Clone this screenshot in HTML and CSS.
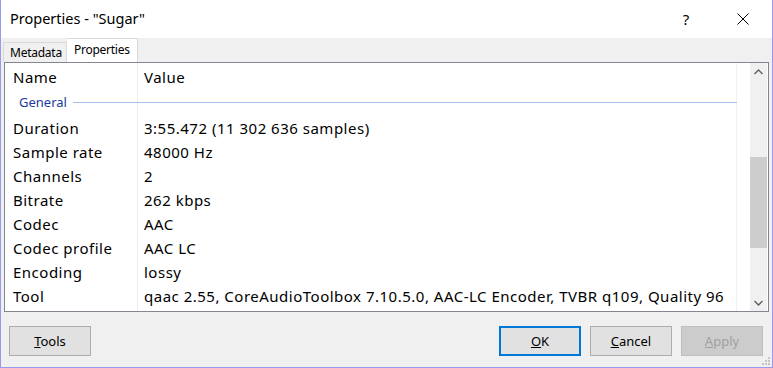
FILE: index.html
```html
<!DOCTYPE html>
<html lang="en">
<head>
    <meta charset="UTF-8">
    <title>Properties - "Sugar"</title>
    <link rel="stylesheet" href="styles.css">
</head>
<body>

    <div class="window">
        <!-- Title bar -->
        <div class="titlebar">
            <span class="title">Properties - "Sugar"</span>
            <span class="caption-btn help">?</span>
            <span class="caption-btn close">
                <svg width="12" height="12" viewBox="0 0 12 12"><path d="M0.5 0.5 L11.5 11.5 M11.5 0.5 L0.5 11.5" stroke="#000" stroke-width="1" fill="none"/></svg>
            </span>
        </div>

        <!-- Tabs -->
        <div class="tabs">
            <div class="tab">Metadata</div>
            <div class="tab active">Properties</div>
        </div>

        <!-- List view -->
        <div class="list">
            <div class="list-body">
                <div class="row head">
                    <div class="name">Name</div>
                    <div class="value">Value</div>
                </div>
                <div class="group"><span>General</span><i></i></div>
                <div class="row"><div class="name">Duration</div><div class="value">3:55.472 (11 302 636 samples)</div></div>
                <div class="row"><div class="name">Sample rate</div><div class="value">48000 Hz</div></div>
                <div class="row"><div class="name">Channels</div><div class="value">2</div></div>
                <div class="row"><div class="name">Bitrate</div><div class="value">262 kbps</div></div>
                <div class="row"><div class="name">Codec</div><div class="value">AAC</div></div>
                <div class="row"><div class="name">Codec profile</div><div class="value">AAC LC</div></div>
                <div class="row"><div class="name">Encoding</div><div class="value">lossy</div></div>
                <div class="row"><div class="name">Tool</div><div class="value">qaac 2.55, CoreAudioToolbox 7.10.5.0, AAC-LC Encoder, TVBR q109, Quality 96</div></div>
            </div>
            <div class="scrollbar">
                <div class="arrow">
                    <svg width="9" height="6" viewBox="0 0 9 6"><path d="M0.5 5 L4.5 1 L8.5 5" stroke="#606060" stroke-width="1.4" fill="none"/></svg>
                </div>
                <div class="track"><div class="thumb"></div></div>
                <div class="arrow">
                    <svg width="9" height="6" viewBox="0 0 9 6"><path d="M0.5 1 L4.5 5 L8.5 1" stroke="#606060" stroke-width="1.4" fill="none"/></svg>
                </div>
            </div>
        </div>

        <!-- Buttons -->
        <div class="footer">
            <button class="btn"><u>T</u>ools</button>
            <span class="spacer"></span>
            <button class="btn default"><u>O</u>K</button>
            <button class="btn"><u>C</u>ancel</button>
            <button class="btn disabled"><u>A</u>pply</button>
            <svg class="grip" width="9" height="9" viewBox="0 0 9 9">
                <rect x="6" y="0" width="2" height="2" fill="#c4c4c4"/>
                <rect x="3" y="3" width="2" height="2" fill="#c4c4c4"/>
                <rect x="6" y="3" width="2" height="2" fill="#c4c4c4"/>
                <rect x="0" y="6" width="2" height="2" fill="#c4c4c4"/>
                <rect x="3" y="6" width="2" height="2" fill="#c4c4c4"/>
                <rect x="6" y="6" width="2" height="2" fill="#c4c4c4"/>
            </svg>
        </div>
    </div>

</body>
</html>
```

FILE: styles.css
```css
/* General Styling */
body {
    margin: 0;
    font-family: 'Noto Sans', 'Open Sans', sans-serif;
    color: #000;
    background: #fff;
}

.window {
    width: 773px;
    height: 368px;
    box-sizing: border-box;
    border: 1px solid #9a9aea;
    border-top: none;
    background: #f0f0f0;
    display: flex;
    flex-direction: column;
}

/* Title bar */
.titlebar {
    height: 38px;
    background: #fff;
    display: flex;
    align-items: center;
    padding: 0 6px 0 9px;
}

.title {
    flex: 1;
    font-size: 14.5px;
    padding-bottom: 2px;
}

.caption-btn {
    width: 46px;
    height: 30px;
    display: flex;
    align-items: center;
    justify-content: center;
}

.help {
    font-size: 15px;
    margin-right: 11px;
}

/* Tabs */
.tabs {
    height: 24px;
    display: flex;
    align-items: flex-end;
    padding-left: 2px;
}

.tab {
    font-size: 12px;
    letter-spacing: -0.25px;
    height: 20px;
    line-height: 19px;
    padding: 0 4px 0 6px;
    border: 1px solid #d9d9d9;
    border-bottom: none;
    background: #f0f0f0;
    box-sizing: border-box;
}

.tab.active {
    height: 24px;
    line-height: 22px;
    padding: 0 7px;
    background: #fff;
    border-left: none;
}

/* List view */
.list {
    height: 250px;
    margin: 0 3px;
    border: 1px solid #828790;
    background: #fff;
    box-sizing: border-box;
    display: flex;
}

.list-body {
    flex: 1;
    position: relative;
    background:
        linear-gradient(#ececec, #ececec) 132px 0 / 1px 100% no-repeat,
        linear-gradient(#eef2f8, #eef2f8) 731px 0 / 1px 100% no-repeat;
}

.row {
    height: 24px;
    display: flex;
    align-items: center;
    font-size: 15px;
    letter-spacing: 0.5px;
    white-space: nowrap;
}

.row.head {
    height: 28px;
}

.name {
    width: 133px;
    padding-left: 8px;
    box-sizing: border-box;
}

.value {
    padding-left: 6px;
}

.group {
    height: 25px;
    display: flex;
    align-items: center;
    font-size: 13px;
    color: #1e3a9e;
    padding-left: 14px;
    padding-bottom: 3px;
    box-sizing: border-box;
}

.group i {
    width: 664px;
    height: 1px;
    margin-left: 6px;
    background: #a9c0e8;
}

/* Scrollbar */
.scrollbar {
    width: 17px;
    margin-right: 1px;
    background: #f0f0f0;
    display: flex;
    flex-direction: column;
}

.arrow {
    height: 17px;
    display: flex;
    align-items: center;
    justify-content: center;
}

.track {
    flex: 1;
    padding-top: 77px;
}

.thumb {
    height: 91px;
    background: #cdcdcd;
}

/* Footer buttons */
.footer {
    flex: 1;
    display: flex;
    align-items: flex-start;
    padding: 14px 9px 0 8px;
    gap: 9px;
    position: relative;
}

.spacer {
    flex: 1;
}

.btn {
    width: 82px;
    height: 30px;
    font-family: inherit;
    font-size: 13px;
    background: #e1e1e1;
    border: 1px solid #adadad;
    color: #000;
    padding: 0;
}

.btn.default {
    border: 2px solid #0078d7;
}

.btn.disabled {
    background: #cccccc;
    border-color: #bfbfbf;
    color: #a0a0a0;
}

.grip {
    position: absolute;
    right: 1px;
    bottom: 1px;
}
```
